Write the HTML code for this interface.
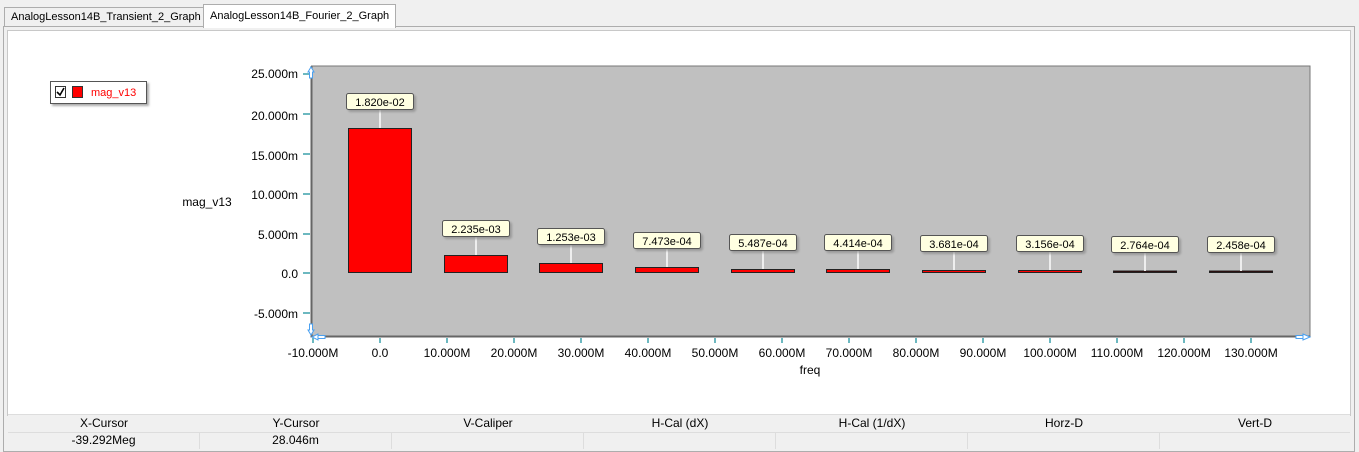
<!DOCTYPE html>
<html><head><style>
body{margin:0;width:1359px;height:451px;background:#f0f0f0;font-family:"Liberation Sans",sans-serif;position:relative;overflow:hidden}
.tab{position:absolute;font-size:11px;color:#000;box-sizing:border-box;border:1px solid #adadad;padding-left:6px}
.hdr div,.val div{position:absolute;top:0;height:17px;line-height:17px;text-align:center;font-size:12px;box-sizing:border-box}
</style></head><body>
<div class="tab" style="left:4px;top:7px;width:200px;height:20px;line-height:19px;background:#f0f0f0;border-bottom:none">AnalogLesson14B_Transient_2_Graph</div>
<div class="tab" style="left:203px;top:4px;width:193px;height:24px;line-height:22px;background:#fff;border-bottom:none;z-index:2">AnalogLesson14B_Fourier_2_Graph</div>
<div style="position:absolute;left:3px;top:26px;width:1350px;height:424px;border:1px solid #adadad;background:#f0f0f0"></div>
<div style="position:absolute;left:7px;top:30px;width:1342px;height:384px;background:#fff;border:1px solid #c8c8c8"></div>
<svg style="position:absolute;left:0;top:0" width="1359" height="451" font-family="Liberation Sans, sans-serif">
<defs><filter id="sh" x="-10%" y="-10%" width="130%" height="150%"><feDropShadow dx="2" dy="2" stdDeviation="1" flood-color="#888" flood-opacity="0.7"/></filter></defs>
<g filter="url(#sh)"><rect x="50.5" y="81.5" width="96" height="22" fill="#fff" stroke="#555"/></g>
<rect x="55.5" y="86.5" width="10" height="11" fill="#fff" stroke="#333"/>
<path d="M57 92 L60 95 L64 88" stroke="#000" stroke-width="1.6" fill="none"/>
<rect x="72.5" y="86.5" width="10" height="11" fill="#f00" stroke="#333"/>
<text x="91" y="96" font-size="11" fill="#f00">mag_v13</text>
<rect x="311" y="66" width="999" height="271" fill="#c0c0c0"/>
<path d="M311 66 H1310 V337" stroke="#777" fill="none"/>
<path d="M311.5 66 V336.5 H1310" stroke="#666" stroke-width="2" fill="none"/>
<g font-size="12" text-anchor="end" fill="#000">
<text x="298" y="78">25.000m</text><text x="298" y="120">20.000m</text><text x="298" y="160">15.000m</text><text x="298" y="199">10.000m</text><text x="298" y="239">5.000m</text><text x="298" y="278">0.0</text><text x="298" y="318">-5.000m</text></g>
<g stroke="#6cb8c0" stroke-width="2"><path d="M303 74H310M303 114H310M303 154H310M303 194H310M303 234H310M303 273H310M303 313H310"/>
<path d="M313 338V343M380 338V343M447 338V343M514 338V343M581 338V343M648 338V343M715 338V343M782 338V343M849 338V343M916 338V343M983 338V343M1050 338V343M1117 338V343M1184 338V343M1251 338V343"/></g>
<g font-size="12" text-anchor="middle"><text x="313" y="357">-10.000M</text><text x="380" y="357">0.0</text><text x="447" y="357">10.000M</text><text x="514" y="357">20.000M</text><text x="581" y="357">30.000M</text><text x="648" y="357">40.000M</text><text x="715" y="357">50.000M</text><text x="782" y="357">60.000M</text><text x="849" y="357">70.000M</text><text x="916" y="357">80.000M</text><text x="983" y="357">90.000M</text><text x="1050" y="357">100.000M</text><text x="1117" y="357">110.000M</text><text x="1184" y="357">120.000M</text><text x="1251" y="357">130.000M</text>
<text x="810" y="374">freq</text><text x="207" y="206">mag_v13</text></g>
<g stroke="#4aa0f0" fill="#fff" stroke-width="1"><path d="M308 72 L311 67 L314 72 L312.5 72 L312.5 78 L309.5 78 L309.5 72Z"/><path d="M308 330 L311 335 L314 330 L312.5 330 L312.5 324 L309.5 324 L309.5 330Z"/><path d="M1303 334 L1310 337 L1303 340 Z M1296 335.5 H1303 V338.5 H1296Z"/><path d="M318 334 L312 337 L318 340Z M318 335.5 H325 V338.5 H318Z"/></g>
<g stroke="#222" fill="#f00">
<rect x="348.5" y="128.5" width="63" height="144"/>
<rect x="444.5" y="255.5" width="63" height="17"/>
<rect x="539.5" y="263.5" width="63" height="9"/>
<rect x="635.5" y="267.5" width="63" height="5"/>
<rect x="731.5" y="269.5" width="63" height="3"/>
<rect x="826.5" y="269.5" width="63" height="3"/>
<rect x="922.5" y="270.5" width="63" height="2"/>
<rect x="1018.5" y="270.5" width="63" height="2"/>
<rect x="1113.5" y="271" width="63" height="1.5" fill="#300"/>
<rect x="1209.5" y="271" width="63" height="1.5" fill="#300"/>
</g>
<g stroke="#eee" stroke-width="2"><path d="M380 110V128M476 237V255M571 245V263M667 249V267M763 251V269M858 251V269M954 252V270M1050 252V270M1145 252V271M1241 252V271"/></g>
<g font-size="11" text-anchor="middle">
<g filter="url(#sh)" fill="#ffffe1" stroke="#555">
<rect x="346.5" y="93.5" width="67" height="16" rx="2"/>
<rect x="442.5" y="220.5" width="67" height="16" rx="2"/>
<rect x="537.5" y="228.5" width="67" height="16" rx="2"/>
<rect x="633.5" y="232.5" width="67" height="16" rx="2"/>
<rect x="729.5" y="234.5" width="67" height="16" rx="2"/>
<rect x="824.5" y="234.5" width="67" height="16" rx="2"/>
<rect x="920.5" y="235.5" width="67" height="16" rx="2"/>
<rect x="1016.5" y="235.5" width="67" height="16" rx="2"/>
<rect x="1111.5" y="236.5" width="67" height="16" rx="2"/>
<rect x="1207.5" y="236.5" width="67" height="16" rx="2"/></g>
<text x="380" y="106">1.820e-02</text><text x="476" y="233">2.235e-03</text><text x="571" y="241">1.253e-03</text><text x="667" y="245">7.473e-04</text><text x="763" y="247">5.487e-04</text><text x="858" y="247">4.414e-04</text><text x="954" y="248">3.681e-04</text><text x="1050" y="248">3.156e-04</text><text x="1145" y="249">2.764e-04</text><text x="1241" y="249">2.458e-04</text>
</g>
</svg>
<div style="position:absolute;left:8px;top:414px;width:1342px;height:34px;background:#f0f0f0;border-top:1px solid #ddd">
<div class="hdr" style="position:absolute;left:0;top:0;width:1342px;height:17px;border-bottom:1px solid #ddd">
<div style="left:0;width:192px">X-Cursor</div><div style="left:192px;width:192px">Y-Cursor</div><div style="left:384px;width:192px">V-Caliper</div><div style="left:576px;width:192px">H-Cal (dX)</div><div style="left:768px;width:192px">H-Cal (1/dX)</div><div style="left:960px;width:192px">Horz-D</div><div style="left:1152px;width:190px">Vert-D</div></div>
<div class="val" style="position:absolute;left:0;top:17px;width:1342px;height:17px">
<div style="left:0;width:192px;border-right:1px solid #ddd">-39.292Meg</div><div style="left:192px;width:192px;border-right:1px solid #ddd">28.046m</div><div style="left:384px;width:192px;border-right:1px solid #ddd"></div><div style="left:576px;width:192px;border-right:1px solid #ddd"></div><div style="left:768px;width:192px;border-right:1px solid #ddd"></div><div style="left:960px;width:192px;border-right:1px solid #ddd"></div><div style="left:1152px;width:190px"></div></div>
</div>
</body></html>
